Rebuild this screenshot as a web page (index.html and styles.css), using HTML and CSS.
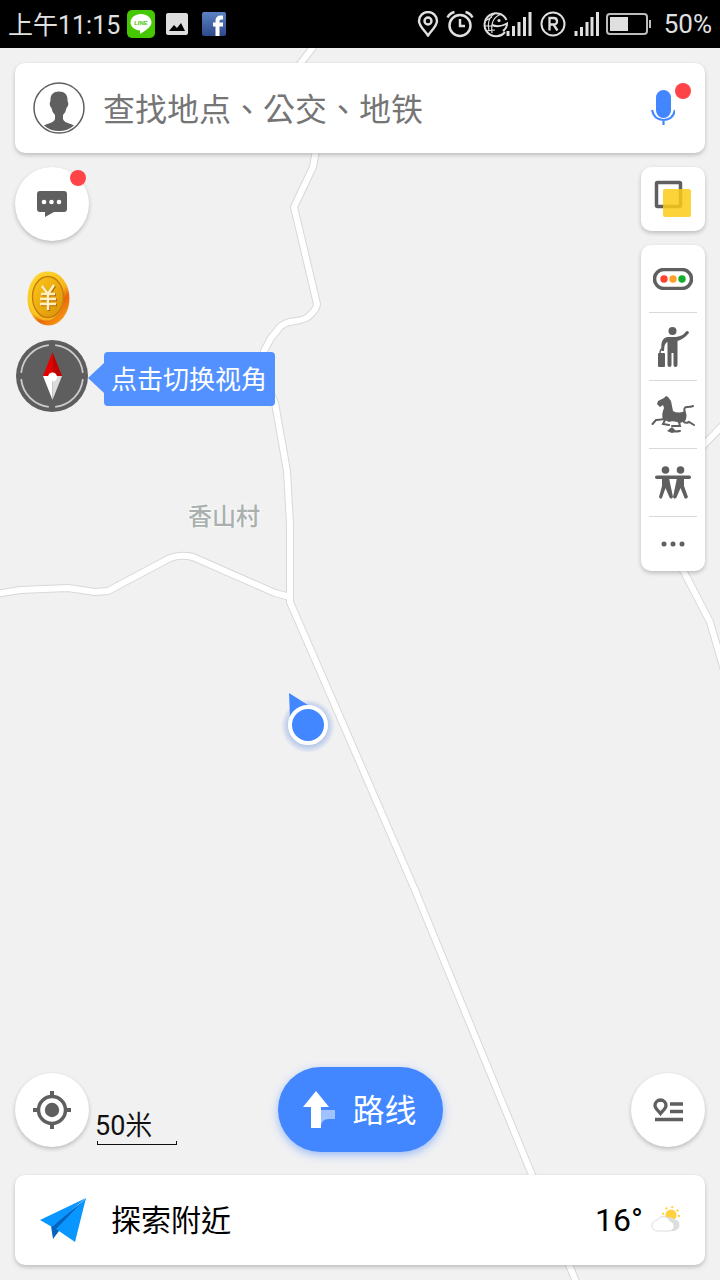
FILE: index.html
```html
<!DOCTYPE html>
<html lang="zh-Hant">
<head>
    <meta charset="UTF-8">
    <meta name="viewport" content="width=device-width, initial-scale=1.0">
    <title>地图</title>
    <link rel="stylesheet" href="styles.css">
</head>
<body>
    <header class="status-bar">
        <span class="status-time">上午11:15</span>
        <svg class="status-line" width="30" height="30" viewBox="0 0 30 30">
            <rect x="1" y="1" width="28" height="28" rx="5" fill="#46c800"/>
            <path d="M15 5C9 5 4.500 9 4.500 13.500C4.500 18 9 21 14 21.500V25C19 22 25.500 18 25.500 13.500C25.500 9 21 5 15 5Z" fill="#fff"/>
            <text x="15" y="16" text-anchor="middle" class="line-word">LINE</text>
        </svg>
        <svg class="status-photo" width="22" height="22" viewBox="0 0 22 22">
            <rect width="22" height="22" rx="2" fill="#dedede"/>
            <path d="M3 18L8 12L11 15L15 10L19 18Z" fill="#000"/>
        </svg>
        <svg width="24" height="24" viewBox="0 0 24 24">
            <defs>
                <linearGradient id="fb" x1="0" y1="0" x2="0" y2="1">
                    <stop offset="0" stop-color="#5c83c4"/>
                    <stop offset="1" stop-color="#2d4a8a"/>
                </linearGradient>
            </defs>
            <rect width="24" height="24" rx="2" fill="url(#fb)"/>
            <path d="M21 5.500H19Q15.500 5.500 15.500 9V24M11 12.500H21" fill="none" stroke="#fff" stroke-width="4"/>
        </svg>
        <div class="status-right">
            <svg width="22" height="26" viewBox="0 0 22 26" fill="none" stroke="#e0e0e0" stroke-width="2.400">
                <path d="M11 24.500C8 20 2 15 2 10A9 9 0 0 1 20 10C20 15 14 20 11 24.500Z"/>
                <circle cx="11" cy="10" r="3.500"/>
            </svg>
            <svg class="icon-alarm" width="28" height="28" viewBox="0 0 28 28" fill="none" stroke="#e0e0e0" stroke-width="2.500">
                <circle cx="14" cy="15.500" r="10.500"/>
                <path d="M14 9V16H19M1.500 7.500Q4 3 8.500 2M26.500 7.500Q24 3 19.500 2"/>
            </svg>
            <svg class="icon-globe" width="50" height="28" viewBox="0 0 50 28">
                <g fill="none" stroke="#e0e0e0" stroke-width="2">
                    <path d="M23 22A11.500 11.500 0 1 1 24.500 10M10 15Q17 18 25 13.500Q25 18 21 21"/>
                    <path d="M13 3Q4 9 7 21M20 4Q8 7 10 23M3 11L10 7M2 16H10M4 21L13 20" stroke-width="1.200"/>
                </g>
                <circle cx="17" cy="10.500" r="1.600" fill="#e0e0e0"/>
                <path d="M26 26V21M31.500 26V16M37 26V12M42.500 26V7M48 26V2" stroke="#e0e0e0" stroke-width="3"/>
            </svg>
            <svg class="icon-roaming" width="26" height="26" viewBox="0 0 26 26" fill="none" stroke="#e0e0e0" stroke-width="2">
                <circle cx="13" cy="13" r="11.500"/>
                <path d="M9.500 19.500V7H13.500Q17 7 17 10.300T13.500 13.500H9.500M13.500 13.500L17.500 19.500" stroke-width="2.300"/>
            </svg>
            <svg class="icon-signal" width="25" height="26" viewBox="0 0 25 26">
                <path d="M2 25V20M7.500 25V16M13 25V11M18 25V6M23.500 25V1" stroke="#e0e0e0" stroke-width="3"/>
            </svg>
            <svg class="icon-battery" width="46" height="22" viewBox="0 0 46 22">
                <rect x="1" y="1" width="40" height="20" rx="3" fill="none" stroke="#bdbdbd" stroke-width="2"/>
                <rect x="4" y="4" width="18" height="14" fill="#e0e0e0"/>
                <path d="M44 7V15" stroke="#bdbdbd" stroke-width="2"/>
            </svg>
            <span class="battery-level">50%</span>
        </div>
    </header>

    <main class="map-screen">
        <!-- Map canvas -->
        <svg class="map" viewBox="0 48 720 1232" preserveAspectRatio="xMidYMid slice">
            <defs>
                <radialGradient id="halo">
                    <stop offset="0.650" stop-color="#4f7fd8" stop-opacity="0.450"/>
                    <stop offset="1" stop-color="#4f7fd8" stop-opacity="0"/>
                </radialGradient>
                <g id="roads" fill="none" stroke-linejoin="round">
                    <path d="M314 46L300 64L300 110L316 150L313 167L294 207L317 304Q317 309 308 317Q305 320 289 322Q283 324 280 327L271 338L264 351Q263 368 267 385L275 403L287 471L290 525V602L340 717L415 890L532 1175L577 1284"/>
                    <path d="M-4 594L20 590L68 588L95 592L108 591L170 558Q180 554 193 557L275 593L290 597"/>
                    <path d="M724 424L670 480L660 530L684 572L710 622L724 670"/>
                </g>
            </defs>
            <use href="#roads" stroke="#d8d8d8" stroke-width="8"/>
            <use href="#roads" stroke="#fff" stroke-width="6"/>
            <text class="place-name" x="188" y="525">香山村</text>
            <circle cx="308" cy="726" r="27" fill="url(#halo)"/>
            <path d="M289 693L311 707L290 717Z" fill="#4287ff"/>
            <circle cx="308" cy="725" r="18" fill="#4287ff" stroke="#fff" stroke-width="4"/>
        </svg>

        <form class="search-bar card">
            <button type="button" class="icon-button" aria-label="我的">
                <svg width="52" height="52" viewBox="0 0 52 52">
                    <circle cx="26" cy="26" r="25" fill="#fff" stroke="#5f5f5f" stroke-width="1.500"/>
                    <path d="M26 9.500C20 9.500 17 13 17.500 19L17 20Q16 24 18.500 26Q19 30 22 33V37C21 41 15 41 11 43.500A23 23 0 0 0 41 43.500C37 41 31 41 30 37V33Q33 30 33.500 26Q36 24 35 20L34.500 19C35 13 32 9.500 26 9.500Z" fill="#5f5f5f"/>
                </svg>
            </button>
            <input type="text" class="search-input" placeholder="查找地点、公交、地铁" aria-label="搜索">
            <button type="button" class="icon-button mic" aria-label="语音">
                <svg width="24" height="36" viewBox="0 0 24 36">
                    <rect x="5" y="0" width="15" height="28" rx="7.500" fill="#4287ff"/>
                    <path d="M1 20Q3 30 12.500 30T24 20M12.500 30V35" fill="none" stroke="#4287ff" stroke-width="2.200"/>
                </svg>
                <span class="dot"></span>
            </button>
        </form>

        <div class="tools">
            <div class="tools-left">
                <button type="button" class="round-button" aria-label="消息">
                    <svg width="30" height="28" viewBox="0 0 30 28">
                        <path d="M3 1H27Q30 1 30 4V19Q30 22 27 22H17L8 27V22H3Q0 22 0 19V4Q0 1 3 1Z" fill="#5f5f5f"/>
                        <g fill="#fff"><circle cx="7" cy="12" r="2.300"/><circle cx="14.500" cy="12" r="2.300"/><circle cx="22" cy="12" r="2.300"/></g>
                    </svg>
                    <span class="dot"></span>
                </button>
                <button type="button" class="icon-button coin" aria-label="金币">
                    <svg width="44" height="56" viewBox="0 0 44 56">
                        <defs>
                            <linearGradient id="rim" x1="0" y1="0" x2="0.700" y2="1">
                                <stop offset="0" stop-color="#ffe02e"/>
                                <stop offset="0.600" stop-color="#f8b51a"/>
                                <stop offset="0.750" stop-color="#e8660a"/>
                                <stop offset="1" stop-color="#f79a12"/>
                            </linearGradient>
                            <linearGradient id="face" x1="0" y1="0" x2="1" y2="1">
                                <stop offset="0" stop-color="#fdc719"/>
                                <stop offset="1" stop-color="#d99008"/>
                            </linearGradient>
                        </defs>
                        <ellipse cx="22.500" cy="28.500" rx="21" ry="27" fill="url(#rim)"/>
                        <ellipse cx="20" cy="26" rx="18" ry="24.500" fill="#fcd02a" opacity="0.700"/>
                        <ellipse cx="22" cy="27" rx="15.500" ry="20.500" fill="url(#face)" stroke="#c87a0a" stroke-width="1.300"/>
                        <path d="M16 16L22 24L28 15M22 24V40M15 24H29M14 29H30M14 34H30" transform="translate(1 1)" fill="none" stroke="#b66708" stroke-width="2.500"/>
                        <path d="M16 16L22 24L28 15M22 24V40M15 24H29M14 29H30M14 34H30" fill="none" stroke="#fff0bd" stroke-width="2.500"/>
                    </svg>
                </button>
                <div class="compass-row">
                    <button type="button" class="icon-button" aria-label="指南针">
                        <svg width="72" height="72" viewBox="0 0 72 72">
                            <circle cx="36" cy="36" r="36" fill="#5e5e5e"/>
                            <circle cx="36" cy="36" r="31" fill="none" stroke="#ccc" stroke-width="1.800" pathLength="360" stroke-dasharray="78 12" stroke-dashoffset="-6"/>
                            <path d="M36.500 12L27 36H36.500Z" fill="#e60000"/>
                            <path d="M36.500 12L46 36H36.500Z" fill="#c40000"/>
                            <path d="M27 36L36.500 60V36Z" fill="#fff"/>
                            <path d="M46 36L36.500 60V36Z" fill="#dcdcdc"/>
                            <circle cx="36.500" cy="37" r="4.500" fill="#fff"/>
                        </svg>
                    </button>
                    <div class="tooltip">点击切换视角</div>
                </div>
            </div>

            <div class="tools-right">
                <button type="button" class="layer-button card" aria-label="图层">
                    <svg width="38" height="38" viewBox="0 0 38 38">
                        <rect x="2.500" y="2.500" width="24" height="24" rx="1" fill="none" stroke="#5f5f5f" stroke-width="3.500"/>
                        <rect x="9" y="9" width="28" height="28" rx="2" fill="#fbcb16" fill-opacity="0.850"/>
                    </svg>
                </button>
                <div class="tool-list card">
                    <button type="button" aria-label="路况">
                        <svg width="40" height="22" viewBox="0 0 40 22">
                            <rect x="1.500" y="1.500" width="37" height="19" rx="9.500" fill="#fff" stroke="#5f5f5f" stroke-width="3.500"/>
                            <circle cx="11" cy="11" r="3.700" fill="#ff4130"/>
                            <circle cx="20" cy="11" r="3.700" fill="#ffa126"/>
                            <circle cx="29" cy="11" r="3.700" fill="#12ad2b"/>
                        </svg>
                    </button>
                    <button type="button" aria-label="打车">
                        <svg width="32" height="42" viewBox="0 0 32 42" fill="#5f5f5f">
                            <circle cx="15.500" cy="5" r="4"/>
                            <path d="M10.500 11H19Q26 10 29 5.500Q31.500 4 32 7Q27 13 20.500 15V39Q20.500 41 18.500 41T16.500 39V27H14.500V39Q14.500 41 12.500 41T10.500 39V16Q7 17 7 25H4.500Q3 12 10.500 11Z"/>
                            <path d="M2 27H7Q8 27 8 28V40Q8 41 7 41H2Q1 41 1 40V28Q1 27 2 27Z"/>
                            <path d="M3 28Q3 23 5 23" fill="none" stroke="#5f5f5f" stroke-width="1.500"/>
                        </svg>
                    </button>
                    <button type="button" aria-label="景点">
                        <svg width="44" height="38" viewBox="0 0 44 38">
                            <path d="M7 5L13 2L15 0L17 1L20 5L22 15Q27 18 34 15Q37 20 34 25L29 27Q22 24 18 26L12 23Q10 19 13 12L12 9L9 11L6 8Z" fill="#5f5f5f"/>
                            <g fill="none" stroke="#5f5f5f" stroke-width="2" stroke-linecap="round">
                                <path d="M34 17Q32 11 36 11T42 10M13 23Q8 24 5 24L1.500 28M14 24L12 28L18 29M32 25Q34 28 38 26L43 29M28 26L29 30H21M19 35Q24 36 29 35"/>
                            </g>
                            <path d="M16 35L21 31L25 35L21 37Z" fill="#5f5f5f"/>
                        </svg>
                    </button>
                    <button type="button" aria-label="组队">
                        <svg width="36" height="34" viewBox="0 0 36 34" fill="#5f5f5f">
                            <circle cx="10.500" cy="4" r="3.800"/>
                            <circle cx="25.500" cy="4" r="3.800"/>
                            <rect x="0" y="9.500" width="36" height="3.500" rx="1.700"/>
                            <path d="M7 12H14L18 31Q16.500 34 14.500 31.500L10.500 22L7 32Q5 34 4 31L7 20ZM22 12H29V20L33 31Q31 34 29.500 32L25.500 22L21.500 31.500Q19.500 34 18 31Z"/>
                        </svg>
                    </button>
                    <button type="button" aria-label="更多">
                        <svg width="24" height="6" viewBox="0 0 24 6" fill="#5f5f5f">
                            <circle cx="3" cy="3" r="2.500"/><circle cx="12" cy="3" r="2.500"/><circle cx="21" cy="3" r="2.500"/>
                        </svg>
                    </button>
                </div>
            </div>
        </div>

        <div class="bottom-row">
            <div class="locate">
                <button type="button" class="round-button" aria-label="定位">
                    <svg width="38" height="38" viewBox="0 0 38 38">
                        <circle cx="19" cy="19" r="13.500" fill="none" stroke="#5f5f5f" stroke-width="3.500"/>
                        <circle cx="19" cy="19" r="7.200" fill="#5f5f5f"/>
                        <path d="M19 0V6M19 32V38M0 19H6M32 19H38" stroke="#5f5f5f" stroke-width="4"/>
                    </svg>
                </button>
                <div class="scale">
                    50米
                    <div class="scale-line"></div>
                </div>
            </div>
            <button type="button" class="route-button">
                <svg width="32" height="40" viewBox="0 0 32 40">
                    <path d="M18 20H32V29H26Q18 29 18 37Z" fill="#a0c2ff"/>
                    <path d="M13 1L26 17H18V38H8V17H0Z" fill="#fff"/>
                </svg>
                <span class="route-label">路线</span>
            </button>
            <button type="button" class="round-button" aria-label="收藏">
                <svg width="30" height="24" viewBox="0 0 30 24">
                    <path d="M7.500 2A5.600 5.600 0 0 1 13 7.500C13 10.500 9.500 13 7.500 15.500C5.500 13 2 10.500 2 7.500A5.600 5.600 0 0 1 7.500 2Z" fill="none" stroke="#5f5f5f" stroke-width="3.300"/>
                    <path d="M17 6H30M17 13.500H30M2 21.500H30" stroke="#5f5f5f" stroke-width="3.300"/>
                </svg>
            </button>
        </div>

        <a href="#" class="explore card">
            <svg width="48" height="44" viewBox="0 0 48 44">
                <path d="M12 28L14 41L20 33L47 1Z" fill="#0463bd"/>
                <path d="M47 0L1 22L13 29Z" fill="#0a96ff"/>
                <path d="M47 0L17 31L36 44Z" fill="#0a96ff"/>
            </svg>
            <span class="explore-title">探索附近</span>
            <span class="temperature">16°</span>
            <svg width="30" height="28" viewBox="0 0 30 28">
                <circle cx="20" cy="9" r="5.500" fill="#ffd23b"/>
                <circle cx="20" cy="9" r="8" fill="none" stroke="#ffd23b" stroke-width="2" stroke-dasharray="2 4.300"/>
                <path d="M12 25H22A6 6 0 0 0 23 13A7 7 0 0 0 12 15Z" fill="#dedede"/>
                <path d="M6.500 25A5.500 5.500 0 0 1 6.500 14A7 7 0 0 1 19 15A5 5 0 0 1 17 25Z" fill="#fff" stroke="#dcdcdc" stroke-width="1"/>
            </svg>
        </a>
    </main>
</body>
</html>
```

FILE: styles.css
```css
* {
    box-sizing: border-box;
}

body {
    margin: 0;
    min-height: 100vh;
    display: flex;
    flex-direction: column;
    font-family: Roboto, "Noto Sans CJK TC", sans-serif;
    background-color: #f1f1f2;
}

svg {
    display: block;
    flex-shrink: 0;
}

button {
    display: flex;
    align-items: center;
    justify-content: center;
    padding: 0;
    border: none;
    background: none;
    font-family: inherit;
    cursor: pointer;
}

/* Status bar */
.status-bar {
    display: flex;
    align-items: center;
    height: 48px;
    padding: 0 8px;
    background-color: #000;
    color: #e0e0e0;
    font-size: 25px;
}

.status-time {
    padding-bottom: 3px;
}

.status-line {
    margin: 0 10px 0 6px;
}

.status-photo {
    margin-right: 14px;
}

.line-word {
    font-family: "Liberation Sans", sans-serif;
    font-size: 6px;
    font-weight: bold;
    fill: #46c800;
}

.status-right {
    display: flex;
    align-items: center;
    margin-left: auto;
}

.icon-alarm {
    margin-left: 7px;
}

.icon-globe,
.icon-roaming,
.icon-signal {
    margin-left: 8px;
}

.icon-battery {
    margin: 0 12px 0 7px;
}

.battery-level {
    font-size: 26px;
}

/* Map */
.map-screen {
    position: relative;
    flex: 1;
    display: flex;
    flex-direction: column;
    padding: 15px;
}

.map {
    position: absolute;
    top: 0;
    left: 0;
    width: 100%;
    height: 100%;
}

.map-screen > :not(.map) {
    position: relative;
}

.place-name {
    font-size: 24px;
    font-weight: 500;
    fill: #a9b0ae;
    stroke: #f8f8f8;
    stroke-width: 2px;
    paint-order: stroke;
}

.card {
    background-color: #fff;
    border-radius: 10px;
    box-shadow: 0 2px 4px rgba(0, 0, 0, 0.22);
}

.dot {
    position: absolute;
    top: 3px;
    right: 3px;
    width: 16px;
    height: 16px;
    border-radius: 50%;
    background-color: #ff4447;
}

/* Search */
.search-bar {
    display: flex;
    align-items: center;
    height: 90px;
    padding: 0 30px 0 18px;
}

.search-input {
    flex: 1;
    min-width: 0;
    margin: 0 18px;
    padding: 3px 0 0;
    border: none;
    outline: none;
    background: none;
    font-family: inherit;
    font-size: 32px;
    color: #333;
}

.search-input::placeholder {
    color: #757575;
}

.mic {
    position: relative;
}

.mic .dot {
    top: -7px;
    right: -16px;
}

/* Tools on both sides of the map */
.tools {
    display: flex;
    justify-content: space-between;
    margin-top: 14px;
}

.round-button {
    position: relative;
    width: 74px;
    height: 74px;
    border-radius: 50%;
    background-color: #fff;
    box-shadow: 0 2px 4px rgba(0, 0, 0, 0.22);
}

.coin {
    margin: 29px 0 14px 11px;
}

.compass-row {
    display: flex;
    align-items: center;
    margin-left: 1px;
}

.tooltip {
    position: relative;
    margin: 5px 0 0 16px;
    padding: 3px 8px 0 7px;
    border-radius: 4px;
    background-color: #5291ff;
    color: #fff;
    font-size: 26px;
    line-height: 51px;
    white-space: nowrap;
}

.tooltip::before {
    content: "";
    position: absolute;
    top: 11px;
    right: 100%;
    border: 15px solid transparent;
    border-left: none;
    border-right: 16px solid #5291ff;
}

.tools-right {
    width: 64px;
}

.layer-button {
    width: 64px;
    height: 64px;
}

.tool-list {
    margin-top: 14px;
    padding: 0 8px;
}

.tool-list button {
    width: 100%;
    height: 68px;
    border-bottom: 1px solid #d9d9d9;
}

.tool-list button:last-child {
    height: 54px;
    border-bottom: none;
}

/* Bottom */
.bottom-row {
    display: grid;
    grid-template-columns: 1fr auto 1fr;
    align-items: center;
    margin-top: auto;
}

.bottom-row > .round-button {
    justify-self: end;
}

.locate {
    display: flex;
    align-items: flex-end;
}

.scale {
    margin-left: 6px;
    padding-bottom: 2px;
    font-size: 27px;
    line-height: 30px;
    color: #111;
}

.scale-line {
    width: 80px;
    height: 4px;
    margin-left: 2px;
    border: 1px solid #111;
    border-top: none;
}

.route-button {
    gap: 17px;
    width: 165px;
    height: 85px;
    border-radius: 43px;
    background-color: #4287ff;
    box-shadow: 0 3px 8px rgba(66, 135, 255, 0.5);
    color: #fff;
    font-size: 32px;
}

.route-label {
    padding-bottom: 4px;
}

.explore {
    display: flex;
    align-items: center;
    height: 90px;
    margin-top: 23px;
    padding: 0 24px;
    color: #000;
    text-decoration: none;
}

.explore-title {
    flex: 1;
    margin-left: 24px;
    padding-bottom: 5px;
    font-size: 30px;
}

.temperature {
    margin-right: 8px;
    font-size: 32px;
}
```
